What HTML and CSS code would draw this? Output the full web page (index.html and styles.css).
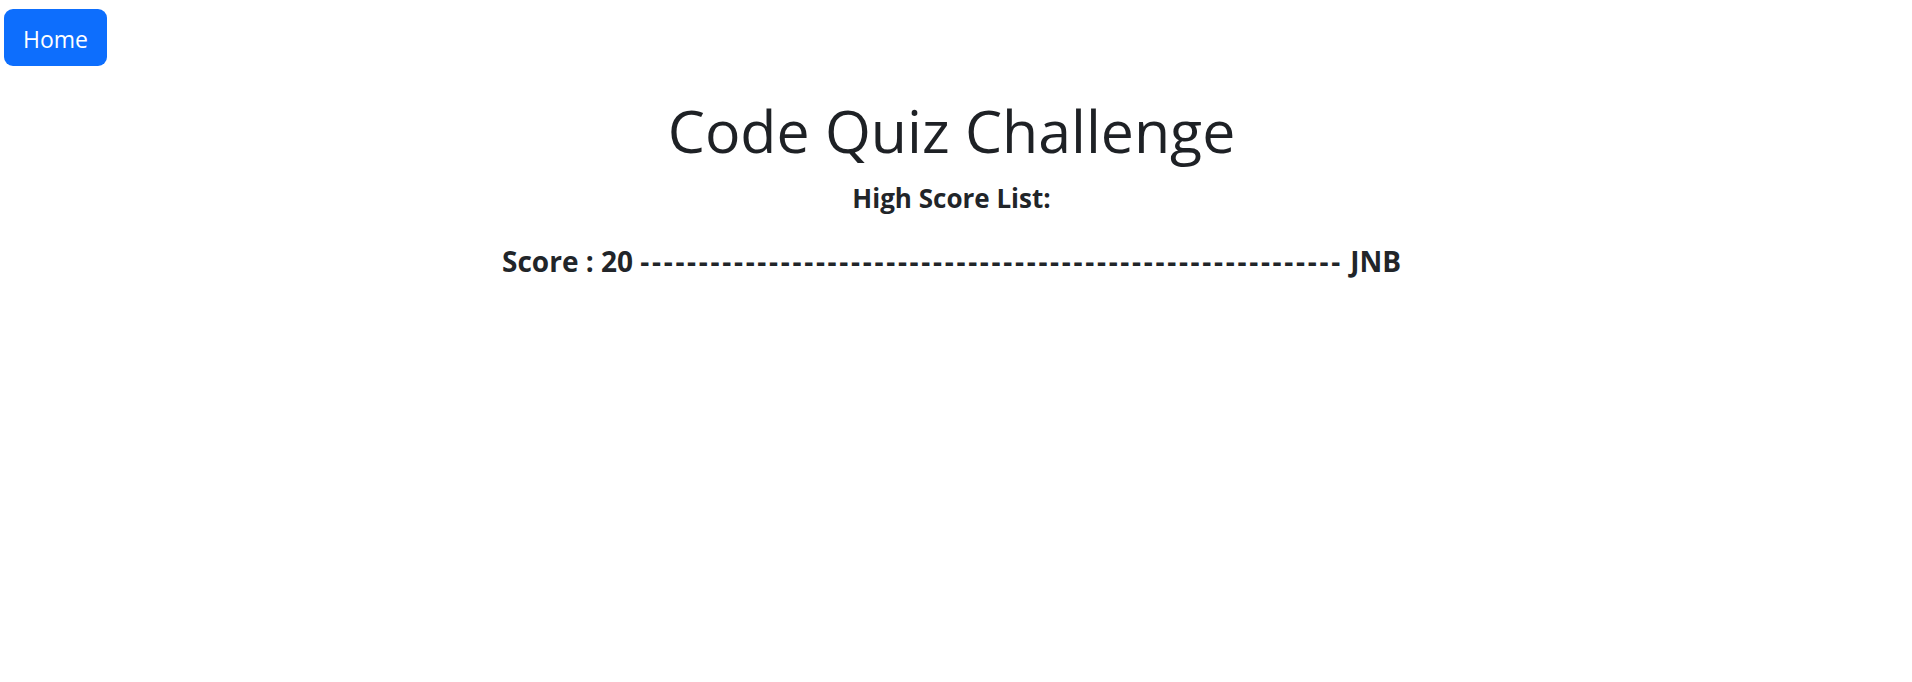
FILE: index.html
```html
<!DOCTYPE html>
<html lang="en">
<head>
<meta charset="utf-8">
<title>Code Quiz Challenge</title>
<link rel="stylesheet" href="styles.css">
</head>
<body>
<nav class="topbar">
  <a class="btn-home" href="#">Home</a>
</nav>
<main class="content">
  <h1 class="title">Code Quiz Challenge</h1>
  <h5 class="subtitle">High Score List:</h5>
  <ul class="scores">
    <li class="score-row">Score : 20 <span class="dashes">------------------------------------------------------------</span> JNB</li>
  </ul>
</main>
</body>
</html>
```
FILE: styles.css
```css
* { box-sizing: border-box; }
html, body { margin: 0; padding: 0; background: #fff; }
body {
  font-family: "Open Sans", "Noto Sans", sans-serif;
  color: #212529;
}
.topbar {
  display: flex;
  padding: 9px 0 0 4px;
}
.btn-home {
  display: inline-flex;
  align-items: center;
  justify-content: center;
  width: 103px;
  height: 57px;
  padding-top: 3px;
  background: #0d6efd;
  color: #fff;
  border-radius: 9px;
  text-decoration: none;
  font-size: 23px;
  line-height: 1;
}
.content {
  display: flex;
  flex-direction: column;
  align-items: center;
  padding-right: 9px;
}
.title {
  margin: 28px 0 0;
  font-size: 59px;
  font-weight: 400;
  line-height: 72px;
  color: #1e2125;
}
.subtitle {
  margin: 12px 0 0;
  font-size: 26px;
  font-weight: 700;
  line-height: 40px;
}
.scores {
  list-style: none;
  margin: 23px 0 0;
  padding: 0;
}
.score-row {
  font-size: 28px;
  font-weight: 700;
  line-height: 40px;
}
.dashes {
  letter-spacing: 2.7px;
}
```
